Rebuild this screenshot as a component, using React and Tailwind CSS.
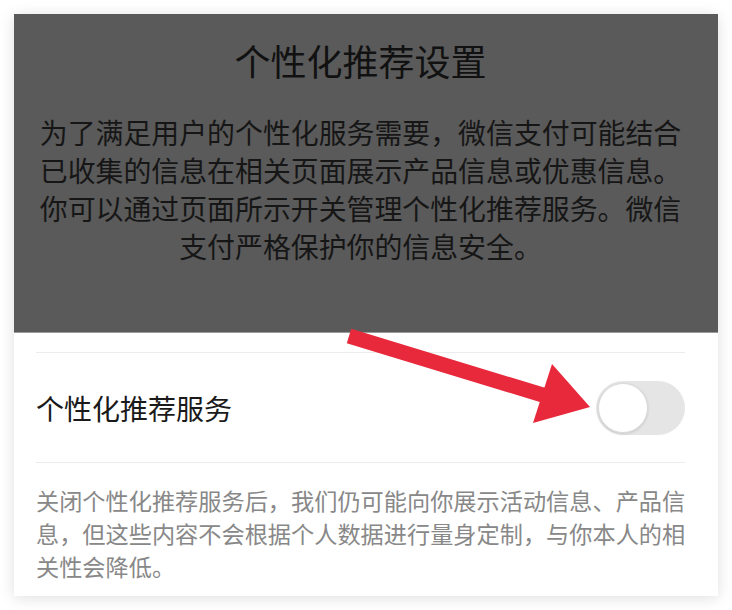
export default function App() {
  const font = { fontFamily: '"Noto Sans CJK SC", "Noto Sans", sans-serif' };
  return (
    <div className="relative w-[732px] h-[610px] bg-white pt-[14px] pl-[14px]" style={font}>
      <div className="w-[704px] bg-white shadow-[0_2px_14px_rgba(0,0,0,0.13)]">
        <div className="h-[319px] bg-[#5a5a5a] border-b border-[#9a9a9a] pt-[22px] pr-[11px]">
          <div className="text-center text-[36px] leading-[48px] text-[#111]">个性化推荐设置</div>
          <div className="mt-[29px] text-center text-[27.9px] leading-[38px] text-[#161616] whitespace-nowrap">
            为了满足用户的个性化服务需要，微信支付可能结合<br />
            已收集的信息在相关页面展示产品信息或优惠信息。<br />
            你可以通过页面所示开关管理个性化推荐服务。微信<br />
            支付严格保护你的信息安全。
          </div>
        </div>
        <div className="pl-[22px] pr-[33px] pt-[19px] pb-[13px]">
          <div className="h-px bg-[#ececec]" />
          <div className="h-[109px] flex items-center justify-between">
            <span className="text-[28px] leading-[38px] text-[#1a1a1a]">个性化推荐服务</span>
            <div className="w-[89px] h-[54px] rounded-full bg-[#e5e5e5] p-[2px] flex items-center">
              <div className="w-[50px] h-[50px] rounded-full bg-white border border-[#d9d9d9] shadow-[0_1px_3px_rgba(0,0,0,0.12)]" />
            </div>
          </div>
          <div className="h-px bg-[#ececec]" />
          <div className="pt-[21px] text-[23.2px] leading-[33px] text-[#888888] whitespace-nowrap">
            关闭个性化推荐服务后，我们仍可能向你展示活动信息、产品信<br />
            息，但这些内容不会根据个人数据进行量身定制，与你本人的相<br />
            关性会降低。
          </div>
        </div>
      </div>
      <svg className="absolute left-0 top-0 pointer-events-none" width="732" height="610" viewBox="0 0 732 610">
        <line x1="349" y1="336" x2="546" y2="396" stroke="#e8293b" strokeWidth="15" />
        <polygon points="552,364 590,407 533,423" fill="#e8293b" />
      </svg>
    </div>
  );
}
